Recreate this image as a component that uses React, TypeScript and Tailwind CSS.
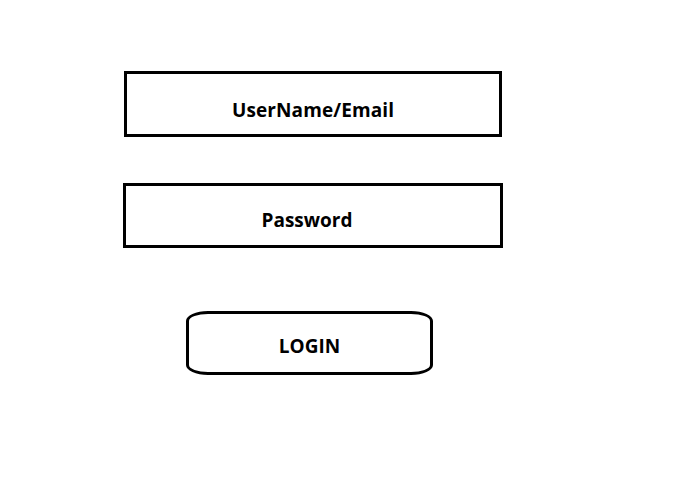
export default function App() {
  return (
    <div className="w-[700px] h-[478px] bg-white relative overflow-hidden" style={{ fontFamily: '"Open Sans", "Noto Sans", sans-serif' }}>
      <div className="flex flex-col pt-[71px]">
        <div className="ml-[124px] w-[378px] h-[66px] border-[3px] border-black flex items-center justify-center pt-[12px]">
          <span className="text-[19px] font-bold text-black leading-none tracking-[0.1px]">UserName/Email</span>
        </div>
        <div className="ml-[123px] mt-[46px] w-[380px] h-[65px] border-[3px] border-black flex items-center justify-center pt-[9px] pr-[12px]">
          <span className="text-[19px] font-bold text-black leading-none">Password</span>
        </div>
        <div className="ml-[186px] mt-[63px] w-[247px] h-[64px] border-[3px] border-black rounded-[22px/10px] flex items-center justify-center pt-[6px]">
          <span className="text-[19px] font-bold text-black leading-none">LOGIN</span>
        </div>
      </div>
    </div>
  );
}
